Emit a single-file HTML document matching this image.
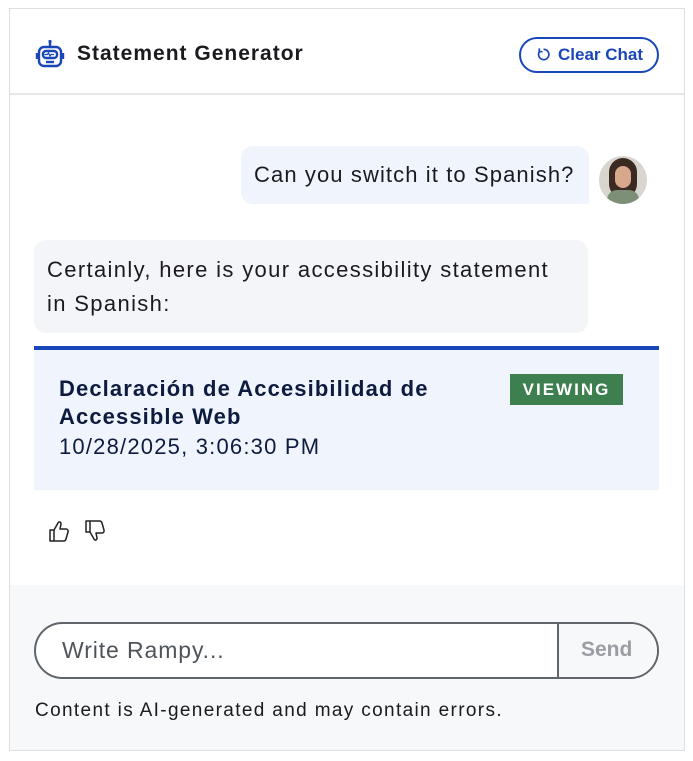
<!DOCTYPE html>
<html><head><meta charset="utf-8"><style>
*{box-sizing:border-box;margin:0;padding:0}
body{width:693px;height:761px;background:#fff;font-family:"Liberation Sans",sans-serif;position:relative;overflow:hidden}
.frame{position:absolute;left:9px;top:8px;width:676px;height:743px;border:1px solid #dcdfe3;background:#fff}
.abs{position:absolute;white-space:nowrap}
</style></head><body>
<div class="frame"></div>
<svg class="abs" style="left:34px;top:38px" width="32" height="32" viewBox="0 0 32 32" fill="none" stroke="#1a47b8" stroke-width="2.4">
<circle cx="16" cy="3.5" r="1.6" fill="#1a47b8" stroke="none"/><line x1="16" y1="4" x2="16" y2="9"/>
<rect x="5" y="9" width="22" height="19" rx="5"/>
<rect x="9" y="13" width="14" height="7" rx="3"/>
<path d="M10.5 16.5h3l1-1.5 1.5 3 1-1.5h3" stroke-width="1.2"/>
<line x1="12" y1="24" x2="20" y2="24"/>
<path d="M3 15v6M29 15v6"/>
</svg>
<div class="abs" style="left:77px;top:42px;font-size:21px;font-weight:bold;color:#1b1b1f;letter-spacing:1px">Statement Generator</div>
<div class="abs" style="left:519px;top:37px;width:140px;height:36px;border:2.5px solid #1a47b8;border-radius:18px;color:#1a47b8;font-weight:bold;font-size:17px;line-height:31px;padding-left:37px">Clear Chat</div>
<svg class="abs" style="left:536px;top:47px" width="15" height="15" viewBox="0 0 16 16" fill="none" stroke="#1a47b8" stroke-width="1.8"><path d="M4 4.5A5.5 5.5 0 1 0 8 2.5"/><path d="M3.5 1.5v3.5h3.5"/></svg>
<div class="abs" style="left:10px;top:93px;width:674px;height:2px;background:#e4e6e9"></div>
<div class="abs" style="left:241px;top:146px;width:348px;height:58px;background:#f0f4fd;border-radius:12px 12px 0 12px;font-size:22px;color:#1b1b1f;line-height:58px;padding-left:13px;letter-spacing:1.1px">Can you switch it to Spanish?</div>
<div class="abs" style="left:599px;top:156px;width:48px;height:48px;border-radius:50%;background:#d9d6d0;overflow:hidden">
<div class="abs" style="left:10px;top:2px;width:28px;height:40px;border-radius:14px;background:#3a2a22"></div>
<div class="abs" style="left:16px;top:10px;width:16px;height:22px;border-radius:8px;background:#d8a88e"></div>
<div class="abs" style="left:8px;top:34px;width:32px;height:20px;border-radius:10px;background:#7d8f76"></div>
</div>
<div class="abs" style="left:34px;top:240px;width:554px;height:93px;background:#f4f5f8;border-radius:12px;font-size:22px;color:#1b1b1f;line-height:34px;padding:13px 0 0 13px;letter-spacing:1.35px">Certainly, here is your accessibility statement<br>in Spanish:</div>
<div class="abs" style="left:34px;top:346px;width:625px;height:144px;background:#eff4fd;border-top:4px solid #1a47b8"></div>
<div class="abs" style="left:59px;top:375px;font-size:22px;font-weight:bold;color:#0d1b3e;line-height:28px;letter-spacing:1.1px">Declaración de Accesibilidad de<br>Accessible Web</div>
<div class="abs" style="left:59px;top:434px;font-size:22px;color:#0d1b3e;letter-spacing:1.2px">10/28/2025, 3:06:30 PM</div>
<div class="abs" style="left:510px;top:374px;width:113px;height:31px;background:#3e7f50;color:#fff;font-weight:bold;font-size:17px;letter-spacing:2px;text-align:center;line-height:31px">VIEWING</div>
<svg class="abs" style="left:47px;top:518px" width="24" height="26" viewBox="0 0 24 26" fill="none" stroke="#222" stroke-width="1.5" stroke-linejoin="round"><path d="M3 12h4v11H3zM7 12l4-7c1-2 3-1 3 1l-1 5h6c1.5 0 2.5 1.5 2 3l-2 7c-.4 1.3-1.3 2-2.5 2H7"/></svg>
<svg class="abs" style="left:83px;top:518px" width="24" height="26" viewBox="0 0 24 26" fill="none" stroke="#222" stroke-width="1.5" stroke-linejoin="round" transform="scale(1,-1)"><path d="M3 12h4v11H3zM7 12l4-7c1-2 3-1 3 1l-1 5h6c1.5 0 2.5 1.5 2 3l-2 7c-.4 1.3-1.3 2-2.5 2H7"/></svg>
<div class="abs" style="left:10px;top:585px;width:674px;height:165px;background:#f7f8fa"></div>
<div class="abs" style="left:34px;top:622px;width:625px;height:57px;border:2.5px solid #5f656b;border-radius:29px;background:#fff;overflow:hidden">
<div class="abs" style="left:26px;top:0;font-size:23px;color:#4e545a;line-height:52px;letter-spacing:0.9px">Write Rampy...</div>
<div class="abs" style="left:521px;top:0;width:110px;height:57px;border-left:2.5px solid #5f656b;background:#f7f8fa;color:#9a9ea3;font-weight:bold;font-size:21px;line-height:52px;padding-left:22px">Send</div>
</div>
<div class="abs" style="left:35px;top:700px;font-size:19px;color:#1b1b1f;letter-spacing:1.35px">Content is AI-generated and may contain errors.</div>
</body></html>
